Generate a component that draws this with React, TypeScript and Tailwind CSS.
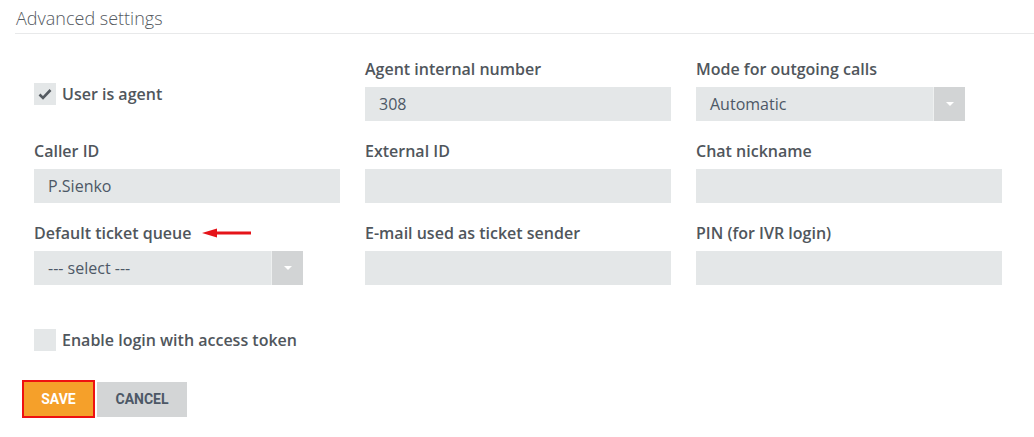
import React from 'react';

const font = { fontFamily: '"Open Sans", "Noto Sans", sans-serif' };

const Label: React.FC<{ children: React.ReactNode }> = ({ children }) => (
  <div className="h-5 text-[16px] leading-5 font-semibold text-[#50565c] mb-2 flex items-center">{children}</div>
);

const Input: React.FC<{ value?: string }> = ({ value }) => (
  <div className="h-[34px] bg-[#e4e7e8] px-[14px] flex items-center text-[16px] text-[#4d5866]">{value}</div>
);

const Select: React.FC<{ value: string }> = ({ value }) => (
  <div className="h-[34px] w-[269px] flex bg-[#e4e7e8]">
    <div className="flex-1 px-[14px] flex items-center text-[16px] text-[#4d5866]">{value}</div>
    <div className="w-[32px] bg-[#d2d4d5] border-l border-[#eef0f0] flex items-center justify-center">
      <svg width="10" height="6" viewBox="0 0 10 6">
        <path d="M1 1h8L5 5z" fill="#ffffff" />
      </svg>
    </div>
  </div>
);

const Checkbox: React.FC<{ checked?: boolean; label: string }> = ({ checked, label }) => (
  <div className="flex items-center gap-[6px]">
    <div className="w-[22px] h-[22px] bg-[#e4e7e8] flex items-center justify-center">
      {checked && (
        <svg width="14" height="12" viewBox="0 0 14 12">
          <path d="M1.5 6.5l3.5 3.5L12.5 2" stroke="#555b61" strokeWidth="2.6" fill="none" />
        </svg>
      )}
    </div>
    <span className="text-[16px] font-semibold text-[#50565c]">{label}</span>
  </div>
);

export default function App() {
  return (
    <div className="w-[1034px] h-[437px] bg-white overflow-hidden" style={font}>
      <div className="ml-[15px] pt-[8px] pb-[5px] border-b border-[#e8e9ea]">
        <div className="pl-px text-[18px] font-light text-[#555a5f] leading-[20px]">Advanced settings</div>
      </div>

      <div className="pl-[34px] pt-[25px]">
        <div className="grid grid-cols-[306px_306px_306px] gap-x-[25px] gap-y-[20px]">
          <div className="pt-[23px]">
            <Checkbox checked label="User is agent" />
          </div>
          <div>
            <Label>Agent internal number</Label>
            <Input value="308" />
          </div>
          <div>
            <Label>Mode for outgoing calls</Label>
            <Select value="Automatic" />
          </div>

          <div>
            <Label>Caller ID</Label>
            <Input value="P.Sienko" />
          </div>
          <div>
            <Label>External ID</Label>
            <Input />
          </div>
          <div>
            <Label>Chat nickname</Label>
            <Input />
          </div>

          <div>
            <Label>
              Default ticket queue
              <svg className="ml-[11px]" width="50" height="10" viewBox="0 0 50 10">
                <path d="M12 5h37" stroke="#e5141a" strokeWidth="3" />
                <path d="M0 5l15-4.5v9z" fill="#e5141a" />
              </svg>
            </Label>
            <Select value="--- select ---" />
          </div>
          <div>
            <Label>E-mail used as ticket sender</Label>
            <Input />
          </div>
          <div>
            <Label>PIN (for IVR login)</Label>
            <Input />
          </div>
        </div>

        <div className="mt-[43px]">
          <Checkbox label="Enable login with access token" />
        </div>
      </div>

      <div className="pl-[22px] mt-[28px] flex items-center gap-[2px]">
        <button
          className="w-[73px] h-[38px] bg-[#f5a02a] border-2 border-[#ee1111] text-white text-[14px] font-bold"
          style={{ fontFamily: '"Roboto", sans-serif' }}
        >
          SAVE
        </button>
        <button
          className="w-[90px] h-[35px] bg-[#d3d5d6] text-[#4d5866] text-[14px] font-bold"
          style={{ fontFamily: '"Roboto", sans-serif' }}
        >
          CANCEL
        </button>
      </div>
    </div>
  );
}
